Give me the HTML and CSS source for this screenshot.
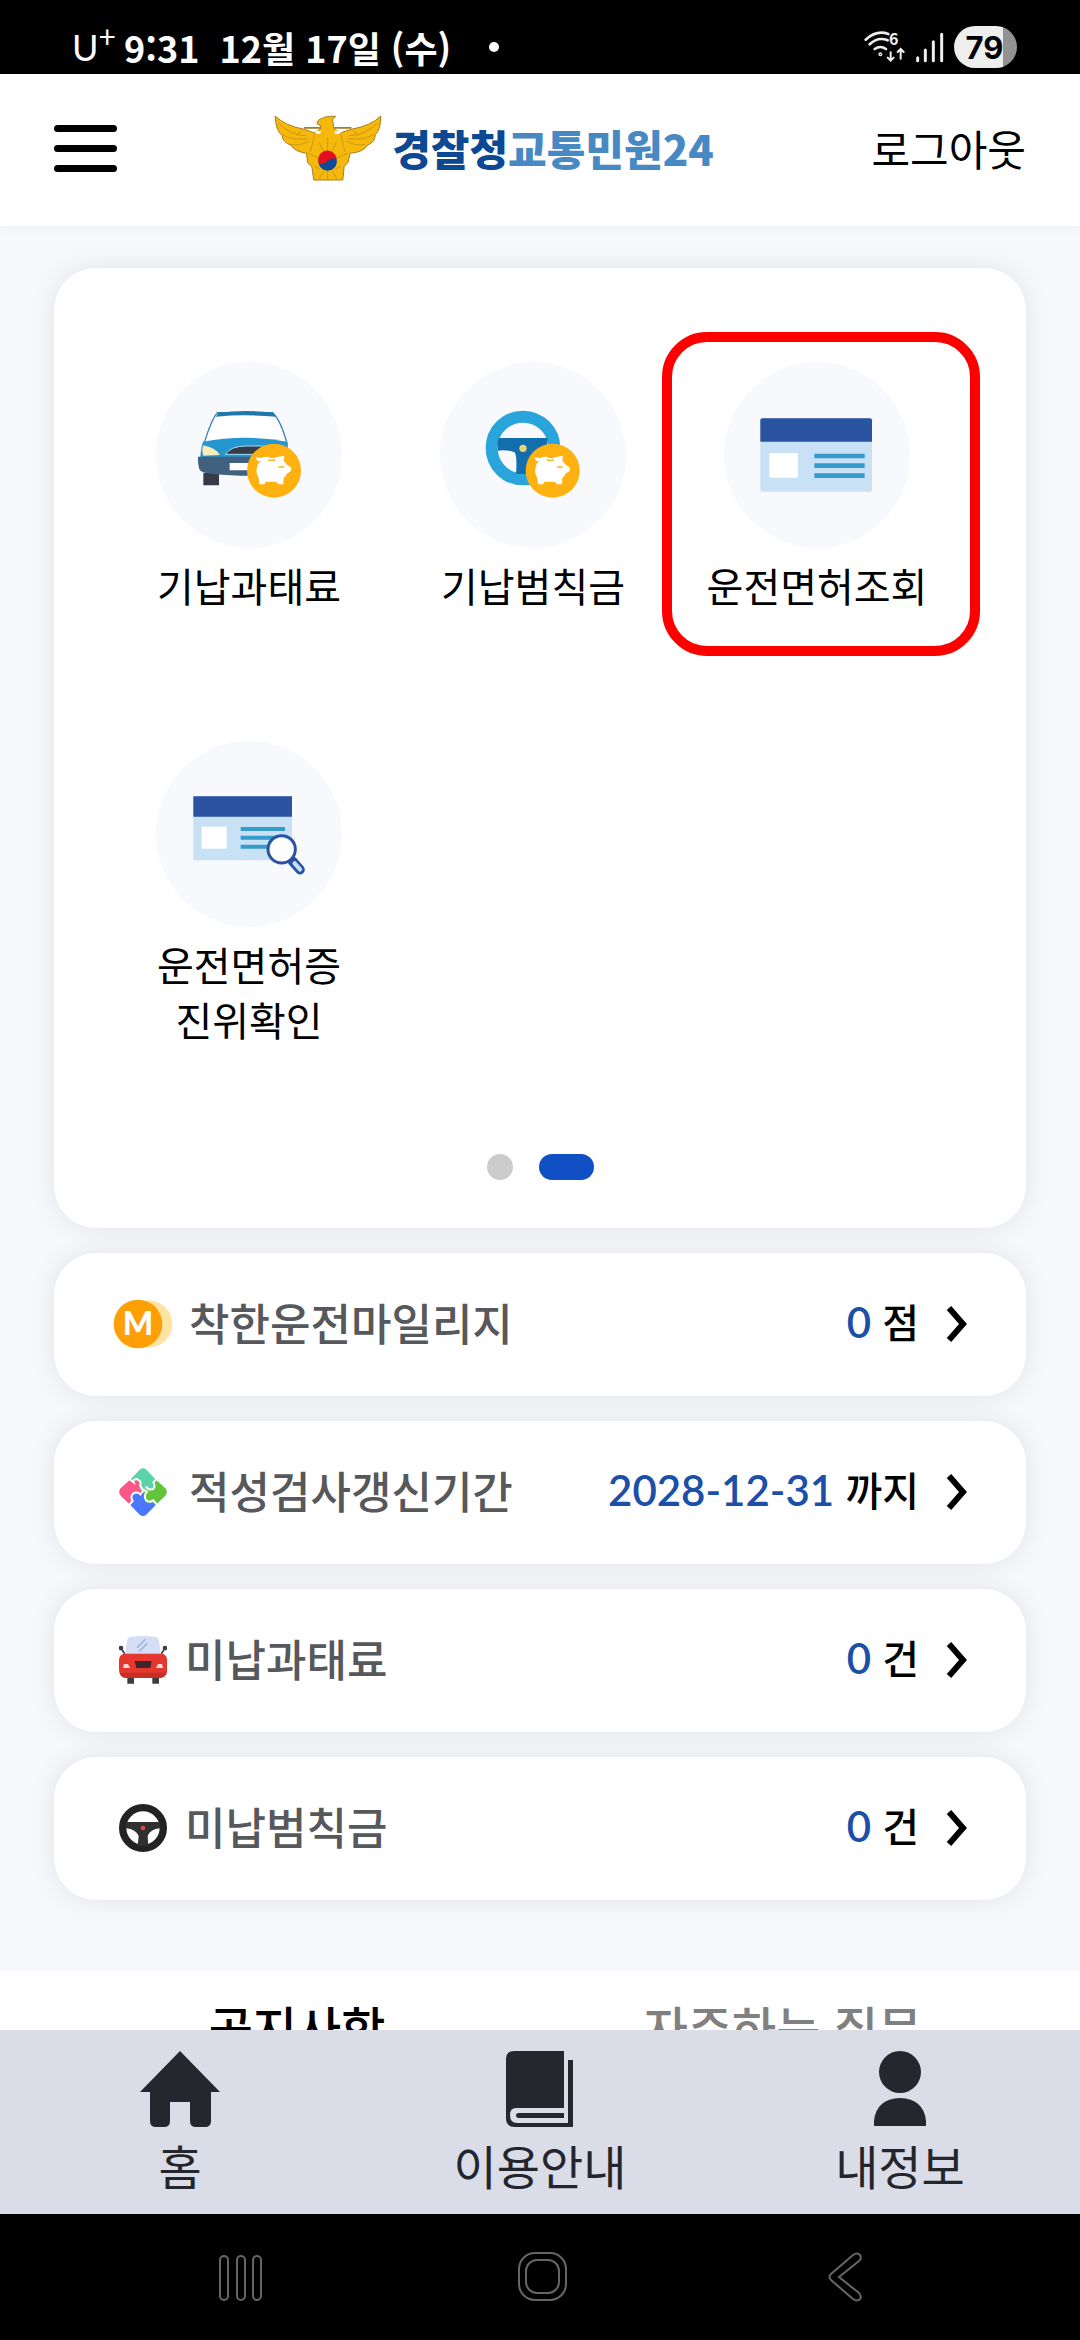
FILE: index.html
```html
<!DOCTYPE html>
<html lang="ko">
<head>
    <meta charset="UTF-8">
    <meta name="viewport" content="width=device-width, initial-scale=1.0">
    <title>경찰청교통민원24</title>
    <link rel="stylesheet" href="styles.css">
</head>
<body>
    <div class="status-bar">
        <div class="status-left">
            <span class="carrier">U<sup>+</sup></span>
            <span>9:31</span>
            <span class="date">12월 17일 (수)</span>
            <span class="status-dot"></span>
        </div>
        <div class="status-right">
            <svg class="wifi" viewBox="70 66 126 96" fill="none" stroke="#eee" stroke-width="8" stroke-linecap="round">
                <path d="M75 92 Q108 62 143 75"/>
                <path d="M87 106 Q112 82 141 94"/>
                <path d="M102 120 Q119 108 136 120"/>
                <circle cx="119" cy="136" r="2"/>
                <path d="M150 130V154M141 146L150 155L159 146M180 149V122M171 129L180 120L189 129" stroke-width="6"/>
                <text x="145" y="109" font-size="48" font-weight="700" fill="#eee" stroke="none">6</text>
            </svg>
            <svg class="signal" viewBox="219 66 90 93" fill="none" stroke="#eee" stroke-width="9" stroke-linecap="round">
                <path d="M227 143V152M250 120V152M274 95V152M299 73V152"/>
            </svg>
            <span class="battery">79</span>
        </div>
    </div>

    <header class="header">
        <button class="menu" type="button" aria-label="메뉴">
            <span></span>
            <span></span>
            <span></span>
        </button>
        <a class="logo" href="#">
            <svg class="emblem" viewBox="42 49 326 200">
                <path d="M45 52 Q75 82 132 92 L160 102 Q181 100 184 82 L172 76 Q172 62 188 59 Q196 52 228 53 L219 62 L222 84 Q226 100 246 102 L276 92 Q335 82 365 52 Q366 90 348 110 Q348 130 325 140 Q312 162 272 165 L266 192 L254 205 L250 246 H162 L156 206 L143 192 L140 165 Q104 160 92 140 Q68 132 66 112 Q46 95 45 52Z" fill="#f6b90b" stroke="#a97b1d" stroke-width="3"/>
                <path d="M132 88H184M222 88H276" stroke="#a97b1d" stroke-width="5"/>
                <path d="M163 98H184L182 106H170ZM224 98H247L240 106H226Z" fill="#fff"/>
                <path d="M56 74Q90 110 140 112M66 108Q98 128 144 120M90 138Q118 144 148 128M354 74Q318 110 268 112M344 108Q310 128 264 120M318 138Q290 144 260 128M110 112L125 96M298 112L283 96M152 160L165 105M256 160L243 105M145 165L178 180M265 165L230 180M165 205L180 212M244 205L228 212M178 242L192 218M232 242L218 218M204 245V218M204 160V118M178 132L193 164M230 132L215 164" fill="none" stroke="#c9971a" stroke-width="3"/>
                <circle cx="204" cy="190" r="28" fill="#0f4a94"/>
                <path d="M177 195A28 28 0 1 1 231 183Q218 175 205 188Q191 202 177 195Z" fill="#e3101f"/>
            </svg>
            <span class="logo-text">경찰청<em>교통민원24</em></span>
        </a>
        <a class="logout" href="#">로그아웃</a>
    </header>

    <main class="content">
        <section class="menu-card">
            <div class="tiles">
                <a class="tile" href="#">
                    <svg class="tile-icon" viewBox="48 66 558 558">
                        <path d="M190 398H237V436H190Z" fill="#353b49"/>
                        <path d="M194 305Q214 240 232 218H398Q422 240 441 310V340H188Z" fill="#fff" stroke="#3183b5" stroke-width="4"/>
                        <path d="M228 230L235 218Q315 208 400 218L408 230Q315 222 228 230Z" fill="#2077aa"/>
                        <path d="M189 305Q315 282 442 305V355H181Q182 325 189 305Z" fill="#2496d0"/>
                        <path d="M190 316Q232 326 239 345L190 347Q184 330 190 316Z" fill="#f9edb5"/>
                        <path d="M256 343Q272 318 320 318H370V343Z" fill="#353b49" stroke="#a5dcf5" stroke-width="3"/>
                        <path d="M174 350H440V407H300Q180 404 178 388Q173 372 174 350Z" fill="#42617e"/>
                        <path d="M269 369H340V391H269Z" fill="#fff"/>
                        <g id="pig">
                            <circle cx="402" cy="392" r="81" fill="#ffb20f"/>
                            <path d="M352 363L347 352L365 354Q370 350 384 350Q398 358 408 352L433 347L431 362L441 374L454 383L452 394L440 401Q438 410 431 414L430 433H414L409 425H378L373 433H358L356 413Q345 398 352 378Q352 367 365 365Z" fill="#fff"/>
                            <path d="M384 359Q395 364 405 359M415 381H432" fill="none" stroke="#ffb20f" stroke-width="4"/>
                        </g>
                    </svg>
                    <span>기납과태료</span>
                </a>
                <a class="tile" href="#">
                    <svg class="tile-icon" viewBox="900 66 558 558">
                        <circle cx="1149" cy="324" r="94" fill="none" stroke="#2aa5db" stroke-width="36"/>
                        <path d="M1076 294H1222Q1228 340 1180 360V402H1128Q1132 350 1124 337Q1100 328 1074 332Q1071 310 1076 294Z" fill="#126fac"/>
                        <circle cx="1149" cy="325" r="11" fill="#ecd377"/>
                        <use href="#pig" x="836"/>
                    </svg>
                    <span>기납범칙금</span>
                </a>
                <a class="tile tile-marked" href="#">
                    <svg class="tile-icon" viewBox="252 154 558 558">
                        <rect x="361" y="323" width="335" height="220" rx="6" fill="#c8e1f5"/>
                        <path d="M361 393V329Q361 323 367 323H690Q696 323 696 329V393Z" fill="#2a53a2"/>
                        <rect x="388" y="427" width="86" height="74" rx="4" fill="#fff"/>
                        <path d="M523 436H674M523 465H674M523 495H674" stroke="#359bca" stroke-width="14"/>
                    </svg>
                    <span>운전면허조회</span>
                </a>
                <a class="tile" href="#">
                    <svg class="tile-icon" viewBox="48 32 558 558">
                        <rect x="160" y="198" width="296" height="192" rx="4" fill="#c8e1f5"/>
                        <path d="M160 198H456V259H160Z" fill="#2a53a2"/>
                        <rect x="185" y="289" width="75" height="66" fill="#fff"/>
                        <path d="M302 296H435M302 322H420M302 349H400" stroke="#359bca" stroke-width="12"/>
                        <path d="M457 392L480 418" stroke="#2a53a2" stroke-width="29" stroke-linecap="round"/>
                        <path d="M464 399L480 417" stroke="#c8e1f5" stroke-width="13" stroke-linecap="round"/>
                        <circle cx="425" cy="357" r="41" fill="#fff" stroke="#2a53a2" stroke-width="9"/>
                    </svg>
                    <span>운전면허증<br>진위확인</span>
                </a>
            </div>
            <div class="pager">
                <button type="button" aria-label="1"></button>
                <button class="active" type="button" aria-label="2"></button>
            </div>
        </section>

        <a class="row" href="#">
            <span class="row-icon">
                <svg width="60" height="50" viewBox="219 297 180 150">
                    <circle cx="326" cy="372" r="71" fill="#ffe3a0"/>
                    <circle cx="294" cy="372" r="73" fill="#ff9f06"/>
                    <text x="294" y="406" font-size="96" font-weight="900" text-anchor="middle" fill="#fff">M</text>
                </svg>
            </span>
            <span class="row-label">착한운전마일리지</span>
            <span class="row-value"><b>0</b> 점</span>
            <svg class="chevron" viewBox="0 0 20 38"><path d="M2 3L16 19L2 35"/></svg>
        </a>
        <a class="row" href="#">
            <span class="row-icon">
                <svg width="48" height="48" viewBox="237 803 144 144">
                    <path d="M270 838L299 808Q309 800 319 808L348 838L309 875Z" fill="#5bd3aa"/>
                    <path d="M348 838L376 864Q385 875 376 886L348 913L309 875Z" fill="#62c33d"/>
                    <path d="M348 913L319 943Q309 951 299 943L270 913L309 875Z" fill="#4b78fb"/>
                    <path d="M270 913L242 886Q233 875 242 864L270 838L309 875Z" fill="#fb5786"/>
                    <circle cx="290" cy="853" r="14" fill="#fb5786"/>
                    <circle cx="331" cy="856" r="14" fill="#5bd3aa"/>
                    <circle cx="328" cy="895" r="14" fill="#62c33d"/>
                    <circle cx="288" cy="893" r="14" fill="#4b78fb"/>
                    <path d="M267 835L281 846Q277 835 292 837Q306 843 300 856L309 868L321 874Q310 887 318 900Q328 908 340 900L351 914" fill="none" stroke="#fff" stroke-width="6"/>
                    <path d="M351 835L340 846Q348 860 338 867Q322 869 318 858M309 872L301 882Q292 872 279 880Q270 888 278 902L267 914" fill="none" stroke="#fff" stroke-width="6"/>
                </svg>
            </span>
            <span class="row-label">적성검사갱신기간</span>
            <span class="row-value"><b>2028-12-31</b> 까지</span>
            <svg class="chevron" viewBox="0 0 20 38"><path d="M2 3L16 19L2 35"/></svg>
        </a>
        <a class="row row-unpaid" href="#">
            <span class="row-icon">
                <svg width="48" height="48" viewBox="237 228 144 144">
                    <path d="M262 345H282V371H262ZM337 345H357V371H337Z" fill="#3d3d40"/>
                    <path d="M244 266L254 281M374 266L364 281" stroke="#3c3e50" stroke-width="5"/>
                    <circle cx="243" cy="264" r="7" fill="#3c3e50"/>
                    <circle cx="375" cy="264" r="7" fill="#3c3e50"/>
                    <path d="M255 283L262 239Q264 230 275 230Q309 226 344 230Q354 230 356 239L363 283Z" fill="#d4def5"/>
                    <path d="M291 263L316 238M297 274L322 250" stroke="#a4b5d8" stroke-width="5"/>
                    <path d="M250 281H368Q382 285 382 305V330Q380 352 360 354H258Q238 352 237 330V300Q238 285 250 281Z" fill="#e4382e"/>
                    <path d="M239 338H380Q376 352 360 354H258Q244 352 239 338Z" fill="#c72e26"/>
                    <path d="M284 303H335L331 324H289Z" fill="#40262a"/>
                    <path d="M252 312H264L270 324H249ZM354 312H366L369 324H348Z" fill="#ffd5dc"/>
                </svg>
            </span>
            <span class="row-label">미납과태료</span>
            <span class="row-value"><b>0</b> 건</span>
            <svg class="chevron" viewBox="0 0 20 38"><path d="M2 3L16 19L2 35"/></svg>
        </a>
        <a class="row row-unpaid" href="#">
            <span class="row-icon">
                <svg width="48" height="48" viewBox="237 732 144 144">
                    <circle cx="309" cy="804" r="61" fill="none" stroke="#232323" stroke-width="22"/>
                    <path d="M258 786H360V805Q330 808 323 828L325 858H293L296 828Q288 808 258 805Z" fill="#303030"/>
                    <circle cx="309" cy="804" r="7" fill="#d9494b"/>
                </svg>
            </span>
            <span class="row-label">미납범칙금</span>
            <span class="row-value"><b>0</b> 건</span>
            <svg class="chevron" viewBox="0 0 20 38"><path d="M2 3L16 19L2 35"/></svg>
        </a>

        <section class="board">
            <button class="tab active" type="button">공지사항</button>
            <button class="tab" type="button">자주하는 질문</button>
        </section>
    </main>

    <nav class="bottom-nav">
        <a href="#">
            <svg width="80" height="76" viewBox="0 0 80 76"><path d="M40 0L80 41H71V70Q71 76 65 76H56Q50 76 50 70V51H30V70Q30 76 24 76H16Q10 76 10 70V41H0Z"/></svg>
            <span>홈</span>
        </a>
        <a href="#">
            <svg width="68" height="76" viewBox="0 0 68 76"><path d="M8 0H58V57H10Q4 57 4 64Q4 72 11 72H62V9H67V76H9Q0 76 0 67V8Q0 0 8 0Z"/><path d="M13 62H58V67H13Q10 67 10 64Q10 62 13 62Z"/></svg>
            <span>이용안내</span>
        </a>
        <a href="#">
            <svg width="52" height="76" viewBox="0 0 52 76"><circle cx="26" cy="21" r="21"/><path d="M0 75V70Q2 48 26 47Q50 48 52 70V75Z"/></svg>
            <span>내정보</span>
        </a>
    </nav>

    <div class="system-nav">
        <button type="button" aria-label="최근 앱">
            <svg width="44" height="48" viewBox="0 0 44 48"><rect x="1" y="2" width="8" height="44" rx="4"/><rect x="18" y="2" width="8" height="44" rx="4"/><rect x="34" y="2" width="8" height="44" rx="4"/></svg>
        </button>
        <button type="button" aria-label="홈 화면">
            <svg width="50" height="50" viewBox="0 0 50 50"><rect x="1" y="1" width="47" height="47" rx="16"/><rect x="8" y="8" width="33" height="33" rx="11"/></svg>
        </button>
        <button type="button" aria-label="뒤로">
            <svg width="34" height="50" viewBox="0 0 34 50"><path d="M25 3Q29 0 32 3Q34 6 31 9L11 25L31 41Q34 45 32 47Q29 50 25 47L3 28Q0 25 3 22Z"/></svg>
        </button>
    </div>
</body>
</html>
```

FILE: styles.css
```css
*, *::after {
    box-sizing: border-box;
}

body {
    font-family: "Noto Sans CJK KR", sans-serif;
    margin: 0;
    height: 100vh;
    display: flex;
    flex-direction: column;
    overflow: hidden;
    background-color: #f6f8fc;
    color: #000;
}

a {
    color: inherit;
    text-decoration: none;
}

button {
    font-family: inherit;
    border: 0;
    padding: 0;
    background: none;
    cursor: pointer;
}

svg {
    display: block;
}

/* Status bar */
.status-bar {
    display: flex;
    justify-content: space-between;
    align-items: center;
    height: 74px;
    padding: 20px 63px 0 72px;
    background-color: #000;
    color: #fff;
    font-size: 36px;
    font-weight: bold;
    line-height: 52px;
}

.status-left, .status-right {
    display: flex;
    align-items: center;
}

.carrier {
    width: 52px;
    font-family: Lato, sans-serif;
    font-weight: 400;
}

.carrier sup {
    font-size: 30px;
    line-height: 0;
}

.date {
    margin-left: 20px;
}

.status-dot {
    width: 10px;
    height: 10px;
    margin-left: 38px;
    border-radius: 50%;
    background-color: #fff;
}

.status-right {
    gap: 9px;
}

.wifi {
    width: 42px;
    height: 32px;
    overflow: visible;
}

.signal {
    width: 30px;
    height: 31px;
}

.battery {
    width: 63px;
    height: 42px;
    padding-right: 2px;
    border-radius: 21px;
    background: linear-gradient(to right, #eee 49px, #929292 49px);
    color: #000;
    font-family: Inter, sans-serif;
    font-size: 31px;
    line-height: 43px;
    text-align: center;
}

/* Header */
.header {
    display: grid;
    grid-template-columns: 1fr auto 1fr;
    align-items: center;
    height: 152px;
    flex-shrink: 0;
    padding: 0 54px 4px;
    background-color: #fff;
    box-shadow: 0 0 12px rgba(0, 0, 0, 0.05);
}

.menu {
    display: flex;
    flex-direction: column;
    gap: 13px;
    width: 63px;
}

.menu span {
    height: 7px;
    border-radius: 4px;
    background-color: #000;
}

.logo {
    display: flex;
    align-items: center;
    gap: 10px;
    margin-right: 92px;
}

.emblem {
    width: 108px;
    height: 66px;
}

.logo-text {
    color: #0d4892;
    font-size: 42px;
    font-weight: 900;
    line-height: 60px;
}

.logo-text em {
    color: #4789c3;
    font-style: normal;
}

.logout {
    font-size: 42px;
    line-height: 60px;
    text-align: right;
}

/* Main */
.content {
    flex: 1;
    min-height: 0;
    overflow: hidden;
    display: flex;
    flex-direction: column;
    gap: 25px;
    padding: 42px 54px 0;
}

.menu-card, .row {
    flex-shrink: 0;
    background-color: #fff;
    border-radius: 42px;
    box-shadow: 0 0 26px rgba(0, 0, 0, 0.09);
}

.menu-card {
    padding: 94px 67px 48px 53px;
}

.tiles {
    display: grid;
    grid-template-columns: repeat(3, 1fr);
    row-gap: 83px;
}

.tile {
    display: flex;
    flex-direction: column;
    align-items: center;
    gap: 10px;
    min-height: 296px;
    font-size: 40px;
    line-height: 55px;
    text-align: center;
    white-space: nowrap;
}

.tile-icon {
    width: 186px;
    height: 186px;
    border-radius: 50%;
    background-color: #f7f9fd;
}

.tile-marked {
    position: relative;
}

.tile-marked::after {
    content: "";
    position: absolute;
    top: -30px;
    left: -13px;
    right: -21px;
    height: 324px;
    border: 10px solid #f00;
    border-radius: 45px;
}

.pager {
    display: flex;
    justify-content: center;
    gap: 26px;
    margin: 107px -14px 0 0;
}

.pager button {
    width: 26px;
    height: 26px;
    border-radius: 13px;
    background-color: #ccc;
}

.pager .active {
    width: 55px;
    background-color: #114fc4;
}

.row {
    display: flex;
    align-items: center;
    height: 143px;
    padding: 0 59px 2px;
}

.row-icon {
    display: flex;
    justify-content: center;
    width: 60px;
    margin-right: 16px;
}

.row-unpaid .row-icon {
    margin-right: 12px;
}

.row-icon text {
    font-family: Lato, sans-serif;
}

.row-label {
    flex: 1;
    padding-bottom: 4px;
    color: #56585b;
    font-size: 44px;
    font-weight: 500;
    line-height: 64px;
}

.row-value {
    padding-bottom: 4px;
    font-size: 40px;
    font-weight: 500;
    line-height: 64px;
}

.row-value b {
    color: #1c4fa8;
    font-family: Lato, sans-serif;
    font-size: 42px;
    font-weight: 600;
}

.chevron {
    width: 20px;
    height: 38px;
    margin-left: 28px;
    fill: none;
    stroke: #000;
    stroke-width: 6;
}

/* Notice / FAQ tabs */
.board {
    display: flex;
    flex-shrink: 0;
    margin: 46px -54px 0;
    padding: 20px 54px;
    background-color: #fff;
}

.tab {
    flex: 1;
    color: #808080;
    font-size: 48px;
    font-weight: 500;
    line-height: 70px;
}

.tab.active {
    color: #000;
}

/* Bottom navigation */
.bottom-nav {
    display: grid;
    grid-template-columns: repeat(3, 1fr);
    height: 184px;
    flex-shrink: 0;
    padding-top: 21px;
    background-color: #dadce7;
    color: #23262d;
}

.bottom-nav a {
    display: flex;
    flex-direction: column;
    align-items: center;
    gap: 6px;
    font-size: 47px;
    line-height: 64px;
}

.bottom-nav svg {
    fill: #24272d;
}

.system-nav {
    display: grid;
    grid-template-columns: repeat(3, 1fr);
    height: 126px;
    flex-shrink: 0;
    padding: 0 84px 38px 90px;
    background-color: #000;
}

.system-nav button {
    display: flex;
    justify-content: center;
    align-items: flex-end;
}

.system-nav svg {
    fill: none;
    stroke: #666;
    stroke-width: 2;
}
```
